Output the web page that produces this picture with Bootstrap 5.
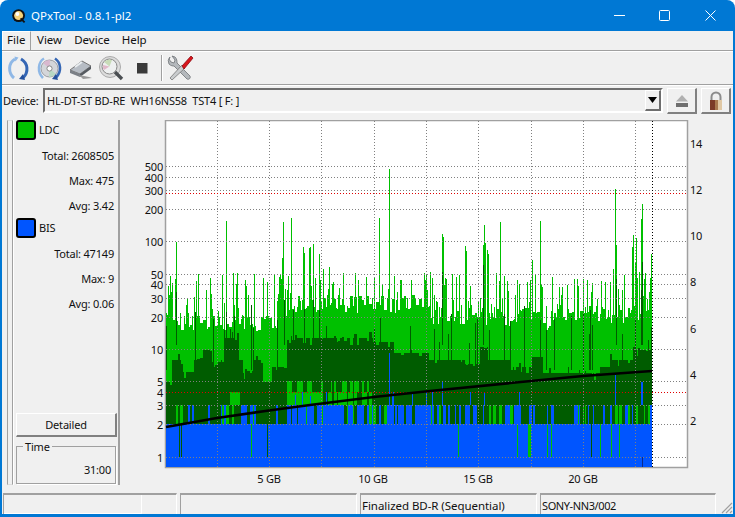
<!DOCTYPE html>
<html lang="en">
<head>
    <meta charset="UTF-8">
    <meta name="viewport" content="width=device-width, initial-scale=1.0">
    <title>QPxTool - 0.8.1-pl2</title>
    <link href="https://cdn.jsdelivr.net/npm/bootstrap@5.3.0/dist/css/bootstrap.min.css" rel="stylesheet">
    <style>
        html, body { width: 735px; height: 517px; overflow: hidden; background: #fff; }
        body { font: 11px/16px "Noto Sans", "Open Sans", sans-serif; letter-spacing: -0.2px; color: #111; }
        .qp-window { width: 735px; height: 517px; background: #0078d4; padding: 0 2px 3px; border-radius: 8px 8px 0 0; display: flex; flex-direction: column; }
        .qp-title { height: 31px; flex: none; color: #fff; font-size: 11.5px; letter-spacing: 0; padding-left: 9px; gap: 4px; }
        .qp-title-btns { margin-left: auto; }
        .qp-title-btns span { width: 45.5px; height: 31px; display: flex; align-items: center; justify-content: center; }
        .qp-client { flex: 1; background: #f0f0f0; display: flex; flex-direction: column; min-height: 0; }
        .qp-menu { height: 20px; flex: none; border-bottom: 1px solid #a0a0a0; box-shadow: 0 1px 0 #fff; font-size: 11.5px; letter-spacing: 0; }
        .qp-menu span { height: 19px; padding: 1px 5px 0; margin-right: 2px; line-height: 16px; }
        .qp-menu .qp-open { border: 1px solid #fff; border-right-color: #a0a0a0; border-bottom: 0; padding: 0 4px; margin-right: 1px; width: 29px; }
        .qp-tools { height: 33px; flex: none; border-bottom: 1px solid #a0a0a0; margin-top: 1px; box-shadow: 0 1px 0 #fff; padding-left: 3px; }
        .qp-tools svg { display: block; flex: none; }
        .qp-sep { width: 1px; height: 26px; background: #a0a0a0; margin: 0 4px 0 9px; box-shadow: 1px 0 0 #fff; }
        .qp-device { height: 32px; flex: none; padding: 3px 3px 0 1px; }
        .qp-devlabel { width: 40px; line-height: 25px; flex: none; }
        .qp-combo { width: 620px; height: 25px; border: 2px solid #6e6e6e; border-right-color: #fff; border-bottom-color: #fff; padding-left: 2px; line-height: 21px; white-space: pre; flex: none; }
        .qp-drop { width: 16px; height: 21px; margin-left: auto; background: #f0f0f0; border: 1px solid #fff; border-right: 2px solid #6e6e6e; border-bottom: 2px solid #6e6e6e; display: flex; align-items: center; justify-content: center; flex: none; }
        .qp-raised { width: 30px; height: 26px; border: 1px solid #fff; border-right: 2px solid #808080; border-bottom: 2px solid #808080; display: flex; align-items: center; justify-content: center; flex: none; }
        .qp-main { height: 370px; flex: none; padding-top: 3px; }
        .qp-strip { width: 6px; margin-left: 5px; flex: none; height: 365px; border-left: 1px solid #a0a0a0; border-right: 1px solid #a0a0a0; box-shadow: 1px 0 0 #fff; border-top: 1px solid #ddd; border-bottom: 1px solid #ddd; }
        .qp-side { width: 107px; height: 365px; flex: none; border-right: 2px solid #a0a0a0; padding: 0 3px; display: flex; flex-direction: column; }
        .qp-swatch { width: 20px; height: 20px; border: 2px solid #000; border-radius: 3px; flex: none; }
        .qp-green { background: #00c000; }
        .qp-blue { background: #0055ff; }
        .qp-legend { height: 20px; gap: 3px; flex: none; line-height: 18px; }
        .qp-val { height: 25px; line-height: 25px; text-align: right; flex: none; padding-right: 1px; white-space: nowrap; }
        .qp-val-first { margin-top: 3px; }
        .qp-detail { height: 24px; width: 101px; flex: none; margin-top: auto; background: #f0f0f0; border: 1px solid #fff; border-right: 2px solid #808080; border-bottom: 2px solid #808080; text-align: center; line-height: 21px; }
        .qp-time { height: 38px; width: 100px; flex: none; margin-top: 9px; margin-bottom: 1px; border: 1px solid #a0a0a0; box-shadow: 1px 1px 0 #fff; position: relative; text-align: right; padding: 15px 4px 0 0; }
        .qp-time b { position: absolute; top: -8px; left: 6px; font-weight: 400; background: #f0f0f0; padding: 0 2px; }
        .qp-chart { display: block; flex: none; }
        .qp-chart text { font: 11px "Noto Sans", "Open Sans", sans-serif; letter-spacing: -0.2px; fill: #111; }
        .qp-status { height: 21px; flex: none; margin-top: 6px; padding-left: 1px; gap: 3px; position: relative; }
        .qp-cell { height: 21px; border-top: 2px solid #a0a0a0; border-left: 1px solid #a0a0a0; border-right: 1px solid #fff; padding-left: 1px; line-height: 21px; white-space: nowrap; flex: none; }
        .qp-cell-a { width: 174px; padding-left: 0; }
        .qp-cell-b { width: 177px; }
        .qp-cell-c { width: 177px; font-size: 11.5px; letter-spacing: -0.05px; }
        .qp-cell-d { width: 176px; letter-spacing: -0.4px; }
        .qp-progress { width: 138px; height: 19px; border-right: 1px solid #fff; border-bottom: 1px solid #fff; }
        .qp-grip { position: absolute; right: 0; bottom: 0; }
    </style>
</head>
<body>
<div class="qp-window">
    <div class="qp-title d-flex align-items-center">
        <svg width="16" height="16" viewBox="0 0 20 20">
            <circle cx="9.5" cy="9.5" r="8" fill="#111"/>
            <circle cx="9.5" cy="9.5" r="5.6" fill="#f4d27a"/>
            <circle cx="8" cy="7.5" r="2.4" fill="#fff"/>
            <path d="M12 13l5 5" stroke="#111" stroke-width="2.4"/>
        </svg>
        <span>QPxTool - 0.8.1-pl2</span>
        <div class="qp-title-btns d-flex">
            <span><svg width="11" height="11"><path d="M0 5.5h11" stroke="#fff"/></svg></span>
            <span><svg width="11" height="11"><rect x=".5" y=".5" width="10" height="10" rx="1" fill="none" stroke="#fff"/></svg></span>
            <span><svg width="11" height="11"><path d="M.5.5l10 10M10.5.5l-10 10" stroke="#fff"/></svg></span>
        </div>
    </div>
    <div class="qp-client">
        <div class="qp-menu d-flex">
            <span class="qp-open">File</span>
            <span>View</span>
            <span>Device</span>
            <span>Help</span>
        </div>
        <div class="qp-tools d-flex align-items-center">
            <svg width="27" height="27" viewBox="0 0 27 27">
                <path d="M10 4C3 8 3 18 9 23" fill="none" stroke="#8fb8e6" stroke-width="3"/>
                <path d="M9.5 1.5l4 1-3 4z" fill="#8fb8e6"/>
                <path d="M16 4c7 4 8 13 2 19" fill="none" stroke="#3566b4" stroke-width="3"/>
                <path d="M20 25l-6-1 4-5z" fill="#24509c"/>
            </svg>
            <svg class="ms-1" width="27" height="27" viewBox="0 0 27 27">
                <circle cx="13.5" cy="13.5" r="8.5" fill="#d4d6da" stroke="#9a9ca2"/>
                <path d="M13.5 13.5L7 8a8.5 8.5 0 0 1 7-3z" fill="#d9b8cf"/>
                <path d="M13.5 13.5L20 19a8.5 8.5 0 0 1-7 3z" fill="#b8d8c4"/>
                <circle cx="13.5" cy="13.5" r="2.6" fill="#fff" stroke="#888"/>
                <path d="M8 3.5C2 7 1 17 7 23" fill="none" stroke="#8fb8e6" stroke-width="2.6"/>
                <path d="M19 3.5c6 4 7 13 1 19" fill="none" stroke="#3566b4" stroke-width="2.6"/>
                <path d="M22 25l-6-1 4-5z" fill="#24509c"/>
            </svg>
            <svg class="ms-1" width="27" height="27" viewBox="0 0 27 27">
                <path d="M3 15L15 6l9 5-11 8z" fill="#b6bcc4" stroke="#777"/>
                <path d="M3 15l10 4v3L3 18z" fill="#7a7f86"/>
                <path d="M13 19l11-8v3L13 22z" fill="#555a60"/>
                <path d="M12 20l10 2 3 1-9 1z" fill="#999"/>
                <path d="M8 12l7-5" stroke="#e8ecef" stroke-width="2"/>
            </svg>
            <svg class="ms-1" width="27" height="27" viewBox="0 0 27 27">
                <circle cx="12" cy="12" r="10.5" fill="#dcdcdc" stroke="#aaa"/>
                <circle cx="11.5" cy="11.5" r="7.5" fill="#eef0f0" stroke="#888"/>
                <path d="M11.5 11.5L6 7a7.5 7.5 0 0 1 8-2z" fill="#c8dcb8"/>
                <path d="M11.5 11.5L5 10a7.5 7.5 0 0 0 1 5z" fill="#e0b8c8"/>
                <path d="M17 17l7 7" stroke="#4a4e52" stroke-width="3.4"/>
            </svg>
            <svg width="27" height="27" viewBox="0 0 27 27">
                <rect x="12" y="8" width="10.5" height="10.5" fill="#3a3a3a"/>
            </svg>
            <div class="qp-sep"></div>
            <svg width="28" height="28" viewBox="0 0 28 28">
                <path d="M4 3a6 6 0 0 0-1 7c2 2 4 2 5 2l13 13c2 1 4-1 3-3L11 9c0-2 0-4-2-6L6 2l3 4-1 3-3-1-2-3z" fill="#b4b8bc" stroke="#6e7276" stroke-width=".8"/>
                <path d="M4 24l12-13 3 3L6 26z" fill="#c9ccce" stroke="#777" stroke-width=".8"/>
                <path d="M16 12l9-10 2 2-9 11z" fill="#d8141c" stroke="#8c0a10" stroke-width=".8"/>
            </svg>
        </div>
        <div class="qp-device d-flex">
            <span class="qp-devlabel">Device:</span>
            <div class="qp-combo d-flex">HL-DT-ST BD-RE  WH16NS58  TST4 [ F: ]<div class="qp-drop"><svg width="9" height="6"><path d="M0 0h9L4.5 6z" fill="#000"/></svg></div></div>
            <div class="qp-raised ms-1">
                <svg width="14" height="14" viewBox="0 0 14 14"><path d="M7 1l6 6.5H1z" fill="#b0b0b0"/><rect x="1" y="9" width="12" height="4" fill="#6e6e6e"/></svg>
            </div>
            <div class="qp-raised ms-1">
                <svg width="18" height="20" viewBox="0 0 18 20"><path d="M4.5 10V6a4.5 4.5 0 0 1 9 0v4" fill="none" stroke="#8c8c8c" stroke-width="2"/><rect x="3" y="9" width="12" height="10" rx="1" fill="#a9794e"/><rect x="3" y="9" width="5" height="10" fill="#7b3a26"/><rect x="11" y="9" width="4" height="10" fill="#e0c8a4"/></svg>
            </div>
        </div>
        <div class="qp-main d-flex">
            <div class="qp-strip"></div>
            <div class="qp-side">
                <div class="qp-legend d-flex align-items-center"><div class="qp-swatch qp-green"></div><span>LDC</span></div>
                <div class="qp-val qp-val-first">Total: 2608505</div>
                <div class="qp-val">Max: 475</div>
                <div class="qp-val">Avg: 3.42</div>
                <div class="qp-legend d-flex align-items-center"><div class="qp-swatch qp-blue"></div><span>BIS</span></div>
                <div class="qp-val qp-val-first">Total: 47149</div>
                <div class="qp-val">Max: 9</div>
                <div class="qp-val">Avg: 0.06</div>
                <div class="qp-detail">Detailed</div>
                <div class="qp-time"><b>Time</b>31:00</div>
            </div>
            <svg id="chart" class="qp-chart" width="613" height="367" viewBox="120 120 613 367"></svg>
        </div>
        <div class="qp-status d-flex">
            <div class="qp-cell qp-cell-a"><div class="qp-progress"></div></div>
            <div class="qp-cell qp-cell-b"></div>
            <div class="qp-cell qp-cell-c">Finalized BD-R (Sequential)</div>
            <div class="qp-cell qp-cell-d">SONY-NN3/002</div>
            <svg class="qp-grip" width="12" height="12"><path d="M11 1L1 11M11 5L5 11M11 9L9 11" stroke="#a0a0a0" stroke-width="1.2"/></svg>
        </div>
    </div>
</div>
<script>
    const NS = 'http://www.w3.org/2000/svg';
    const chart = document.getElementById('chart');

    function add(name, attrs, text) {
        const el = document.createElementNS(NS, name);
        for (const k in attrs) el.setAttribute(k, attrs[k]);
        if (text !== undefined) el.textContent = text;
        chart.appendChild(el);
        return el;
    }

    // small seeded random, so every render is the same
    let seed = 12345;
    function rnd() {
        seed = (seed * 1664525 + 1013904223) % 4294967296;
        return seed / 4294967296;
    }

    const LEFT = 166, END = 652, RIGHT = 687, PLOT_TOP = 121, BOTTOM = 467;
    const DARK = '#005c00', LIGHT = '#00c000', BLUE = '#0055ff';

    add('rect', { x: 165.5, y: 120.5, width: 522, height: 347, fill: '#fff', stroke: '#a0a0a0', 'stroke-width': 1.5 });

    // top of the dark green per x range [untilX, y]
    const darkSteps = [[172,382],[182,360],[193,372],[203,360],[212,350],[224,362],[238,338],[243,360],[253,373],[263,360],[271,382],[285,367],
        [297,340],[373,338],[393,342],[428,353],[463,360],[478,364],[488,347],[510,360],[530,367],[543,357],[597,373],[610,367],[633,360],[653,350]];
    // top of the light green
    const lightSteps = [[287,322],[430,304],[540,317],[552,328],[653,314]];

    function stepAt(table, x) {
        for (const s of table) if (x < s[0]) return s[1];
        return table[table.length - 1][1];
    }

    // base layer, then an overlay for everything that sits on top of it
    const paths = { [LIGHT]: '', [DARK]: '', [BLUE]: '' };
    const over = { [LIGHT]: '', [DARK]: '', [BLUE]: '' };
    function col(color, x, y1, y2) { paths[color] += `M${x}.5 ${y1}V${y2}`; }
    function overCol(color, x, y1, y2) { over[color] += `M${x}.5 ${y1}V${y2}`; }

    let cx = LEFT;
    while (cx < END) {
        const w = 1 + Math.floor(rnd() * 3);
        const lightBase = stepAt(lightSteps, cx) + (rnd() - 0.5) * 18;
        const darkBase = stepAt(darkSteps, cx) + (rnd() < 0.3 ? (rnd() - 0.5) * 14 : 0);
        // what fills the 2-3 strip in this column
        let blueChance = 0.25;
        if (cx >= 285 && cx < 430) blueChance = 0.7;
        else if (cx >= 430 && cx < 530) blueChance = 0.4;
        else if (cx >= 530) blueChance = 0.18;
        const r = rnd();
        const strip = r < blueChance ? BLUE : (r < blueChance + 0.12 ? LIGHT : DARK);
        const lightPatch = cx >= 287 && cx < 373;
        const lowPatch = lightPatch && rnd() < 0.8;
        const midPatch = lightPatch && rnd() < 0.45;
        for (let i = 0; i < w && cx < END; i++, cx++) {
            col(LIGHT, cx, Math.round(lightBase), 424);
            col(DARK, cx, Math.round(darkBase), 405);
            if (lowPatch) overCol(LIGHT, cx, 392, 405);
            if (midPatch) overCol(LIGHT, cx, 381, 392);
            if (cx >= 230 && cx < 240) overCol(LIGHT, cx, 392, 405);
            col(strip, cx, 405, 424);
            col(BLUE, cx, 424, BOTTOM);
        }
    }
    // extra random spikes above the green body
    for (let i = 0; i < 190; i++) {
        const sx = LEFT + Math.floor(rnd() * (END - LEFT));
        col(LIGHT, sx, 272 + Math.floor(rnd() * 45), 335);
    }
    for (let i = 0; i < 45; i++) {
        const sx = LEFT + Math.floor(rnd() * (END - LEFT));
        col(DARK, sx, 305 + Math.floor(rnd() * 40), 370);
    }
    // the tall spikes, read from the reference
    [[176,242],[175,279],[198,294],[210,292],[222,276],[226,221],[233,273],[237,273],[254,274],[274,274],[282,258],[283,222],[291,218],
     [303,247],[304,253],[309,248],[310,247],[313,244],[319,254],[323,269],[329,267],[332,284],[358,280],[374,277],[379,218],[389,169],
     [394,284],[426,275],[442,234],[443,237],[465,246],[466,251],[470,286],[483,245],[484,225],[485,243],[487,250],[488,254],[496,273],
     [500,222],[532,260],[535,274],[540,221],[541,285],[542,287],[559,287],[567,285],[577,279],[578,286],[613,269],[615,189],[616,245],
     [622,290],[624,275],[632,247],[633,235],[635,263],[636,238],[639,272],[641,219],[642,204],[649,292],[651,254]]
        .forEach(s => col(LIGHT, s[0], s[1], 330));
    [[176,292],[442,272],[483,265],[616,279],[642,262],[641,290],[284,300],[313,300],[319,310]]
        .forEach(s => col(DARK, s[0], s[1], 345));
    // blue bars poking up out of the strip
    [[295,395],[302,392],[326,392],[389,353],[392,395],[393,392],[412,392],[426,392],[442,382],[432,392],[470,392],[484,392],
     [519,392],[615,375],[642,382],[641,382],[310,396]].forEach(s => overCol(BLUE, s[0], s[1], 405));
    // thin marks down in the blue area
    [179,181,267,591].forEach(m => overCol(DARK, m, 424, 457));
    [251,458,517,528,529,530,547,551,600,611,619].forEach(m => overCol(LIGHT, m, 424, 457));

    for (const set of [paths, over]) {
        for (const c of [LIGHT, DARK, BLUE]) {
            add('path', { d: set[c], stroke: c, 'stroke-width': 1, fill: 'none', 'shape-rendering': 'crispEdges' });
        }
    }
    add('path', { d: 'M642.5 457V467', stroke: '#0a2a8c', 'stroke-width': 1, 'shape-rendering': 'crispEdges' });

    // grid
    const hLines = [166,177,190,209,241,274,284,298,317,349,381,405,424,457];
    hLines.forEach(y => add('path', { d: `M166 ${y}.5H${RIGHT}`, stroke: '#808080', 'stroke-dasharray': '1 2', 'shape-rendering': 'crispEdges' }));
    [217,269,321,374,426,478,531,583,635].forEach(v => add('path', { d: `M${v}.5 ${PLOT_TOP}V${BOTTOM}`, stroke: '#808080', 'stroke-dasharray': '1 2', 'shape-rendering': 'crispEdges' }));
    add('path', { d: `M166 193.5H${RIGHT}M166 392.5H${RIGHT}`, stroke: '#e00000', 'stroke-dasharray': '1 2', 'shape-rendering': 'crispEdges' });

    // speed curve
    add('path', { d: 'M166 427L217 418L269 410.5L310 405L374 397L430 391L531 381L583 376L652 371', stroke: '#000', 'stroke-width': 2.6, fill: 'none' });
    add('path', { d: `M652.5 ${PLOT_TOP}V${BOTTOM}`, stroke: '#000', 'stroke-dasharray': '1 2', 'shape-rendering': 'crispEdges' });

    // axis labels
    [[500,171],[400,182],[300,195],[200,214],[100,246],[50,279],[40,289],[30,303],[20,322],[10,354],[5,386],[4,397],[3,410],[2,429],[1,462]]
        .forEach(l => add('text', { x: 163, y: l[1], 'text-anchor': 'end' }, l[0]));
    [[14,148],[12,194],[10,240],[8,286],[6,333],[4,379],[2,425]]
        .forEach(l => add('text', { x: 690, y: l[1] }, l[0]));
    [['5 GB',269],['10 GB',373],['15 GB',478],['20 GB',583]]
        .forEach(l => add('text', { x: l[1], y: 483, 'text-anchor': 'middle' }, l[0]));
</script>
<script src="https://cdn.jsdelivr.net/npm/bootstrap@5.3.0/dist/js/bootstrap.bundle.min.js"></script>
</body>
</html>
